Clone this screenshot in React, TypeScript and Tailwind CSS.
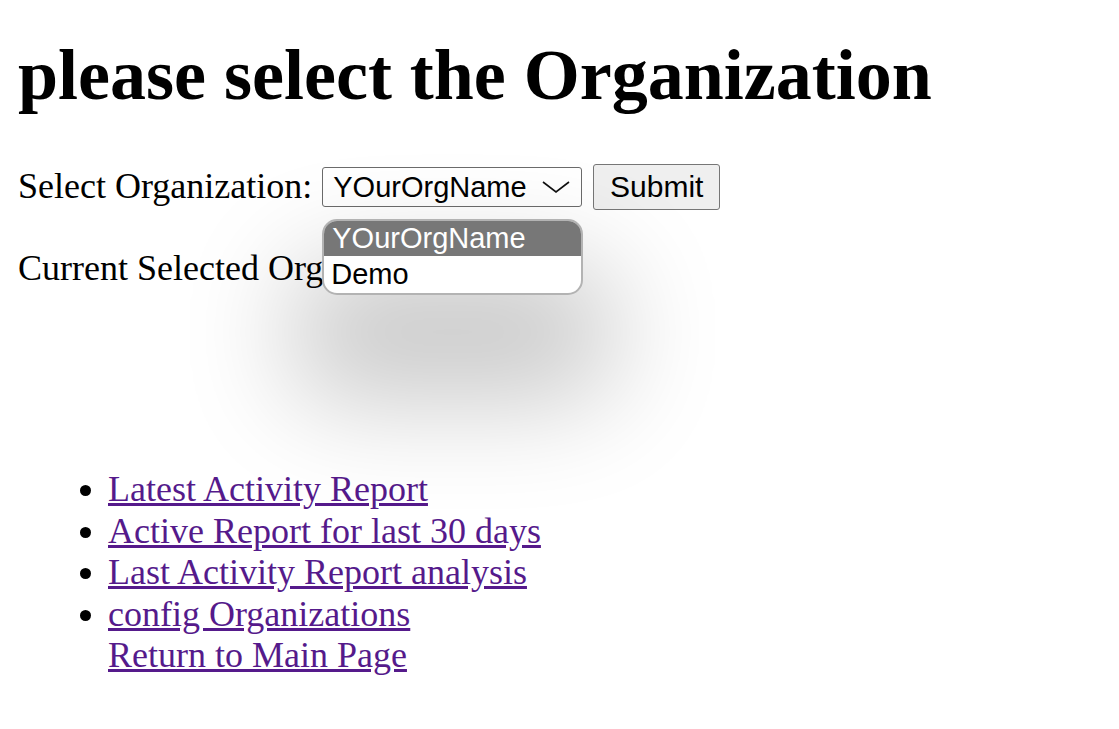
import React from "react";

export default function App() {
  const serif = "font-['Liberation_Serif','Times_New_Roman',serif]";
  const sans = "font-['Liberation_Sans',Arial,sans-serif]";
  return (
    <div className={`${serif} min-h-[729px] bg-white px-[18px] text-[36px] leading-[41.4px] text-black`}>
      <h1 className="mt-[34px] text-[72px] font-bold leading-[83px]">please select the Organization</h1>

      <div className="mt-[47px] flex h-[46px] items-center">
        <span>Select Organization:</span>
        <div className="relative ml-[10px]">
          <div className={`${sans} flex h-[40px] w-[260px] items-center rounded-[3px] border border-[#6b6b6b] bg-white pl-[10px] pr-[11px] text-[29px] leading-none`}>
            <span className="flex-1">YOurOrgName</span>
            <svg width="28" height="12" viewBox="0 0 28 12" fill="none" stroke="#111" strokeWidth="1.6">
              <polyline points="1,1 14,11 27,1" />
            </svg>
          </div>
          <div className={`${sans} absolute left-0 top-[52px] z-10 w-[261px] overflow-hidden rounded-[15px] border-[2.5px] border-[#b3b3b3] bg-white text-[29px] leading-none shadow-[0_75px_110px_30px_rgba(0,0,0,0.22)]`}>
            <div className="flex h-[35px] items-center bg-[#777777] pl-[8px] text-white">YOurOrgName</div>
            <div className="flex h-[37px] items-center pl-[7px] text-black">Demo</div>
          </div>
        </div>
        <div className={`${sans} ml-[11px] flex h-[46px] w-[127px] items-center justify-center rounded-[3px] border border-[#767676] bg-[#efefef] text-[30px] leading-none`}>
          Submit
        </div>
      </div>

      <p className="mt-[38px]">Current Selected Organization:</p>

      <ul className="mt-[180px] list-disc pl-[90px]">
        <li><a href="#" className="text-[#551a8b] underline">Latest Activity Report</a></li>
        <li><a href="#" className="text-[#551a8b] underline">Active Report for last 30 days</a></li>
        <li><a href="#" className="text-[#551a8b] underline">Last Activity Report analysis</a></li>
        <li>
          <a href="#" className="text-[#551a8b] underline">config Organizations</a>
          <br />
          <a href="#" className="text-[#551a8b] underline">Return to Main Page</a>
        </li>
      </ul>
    </div>
  );
}
